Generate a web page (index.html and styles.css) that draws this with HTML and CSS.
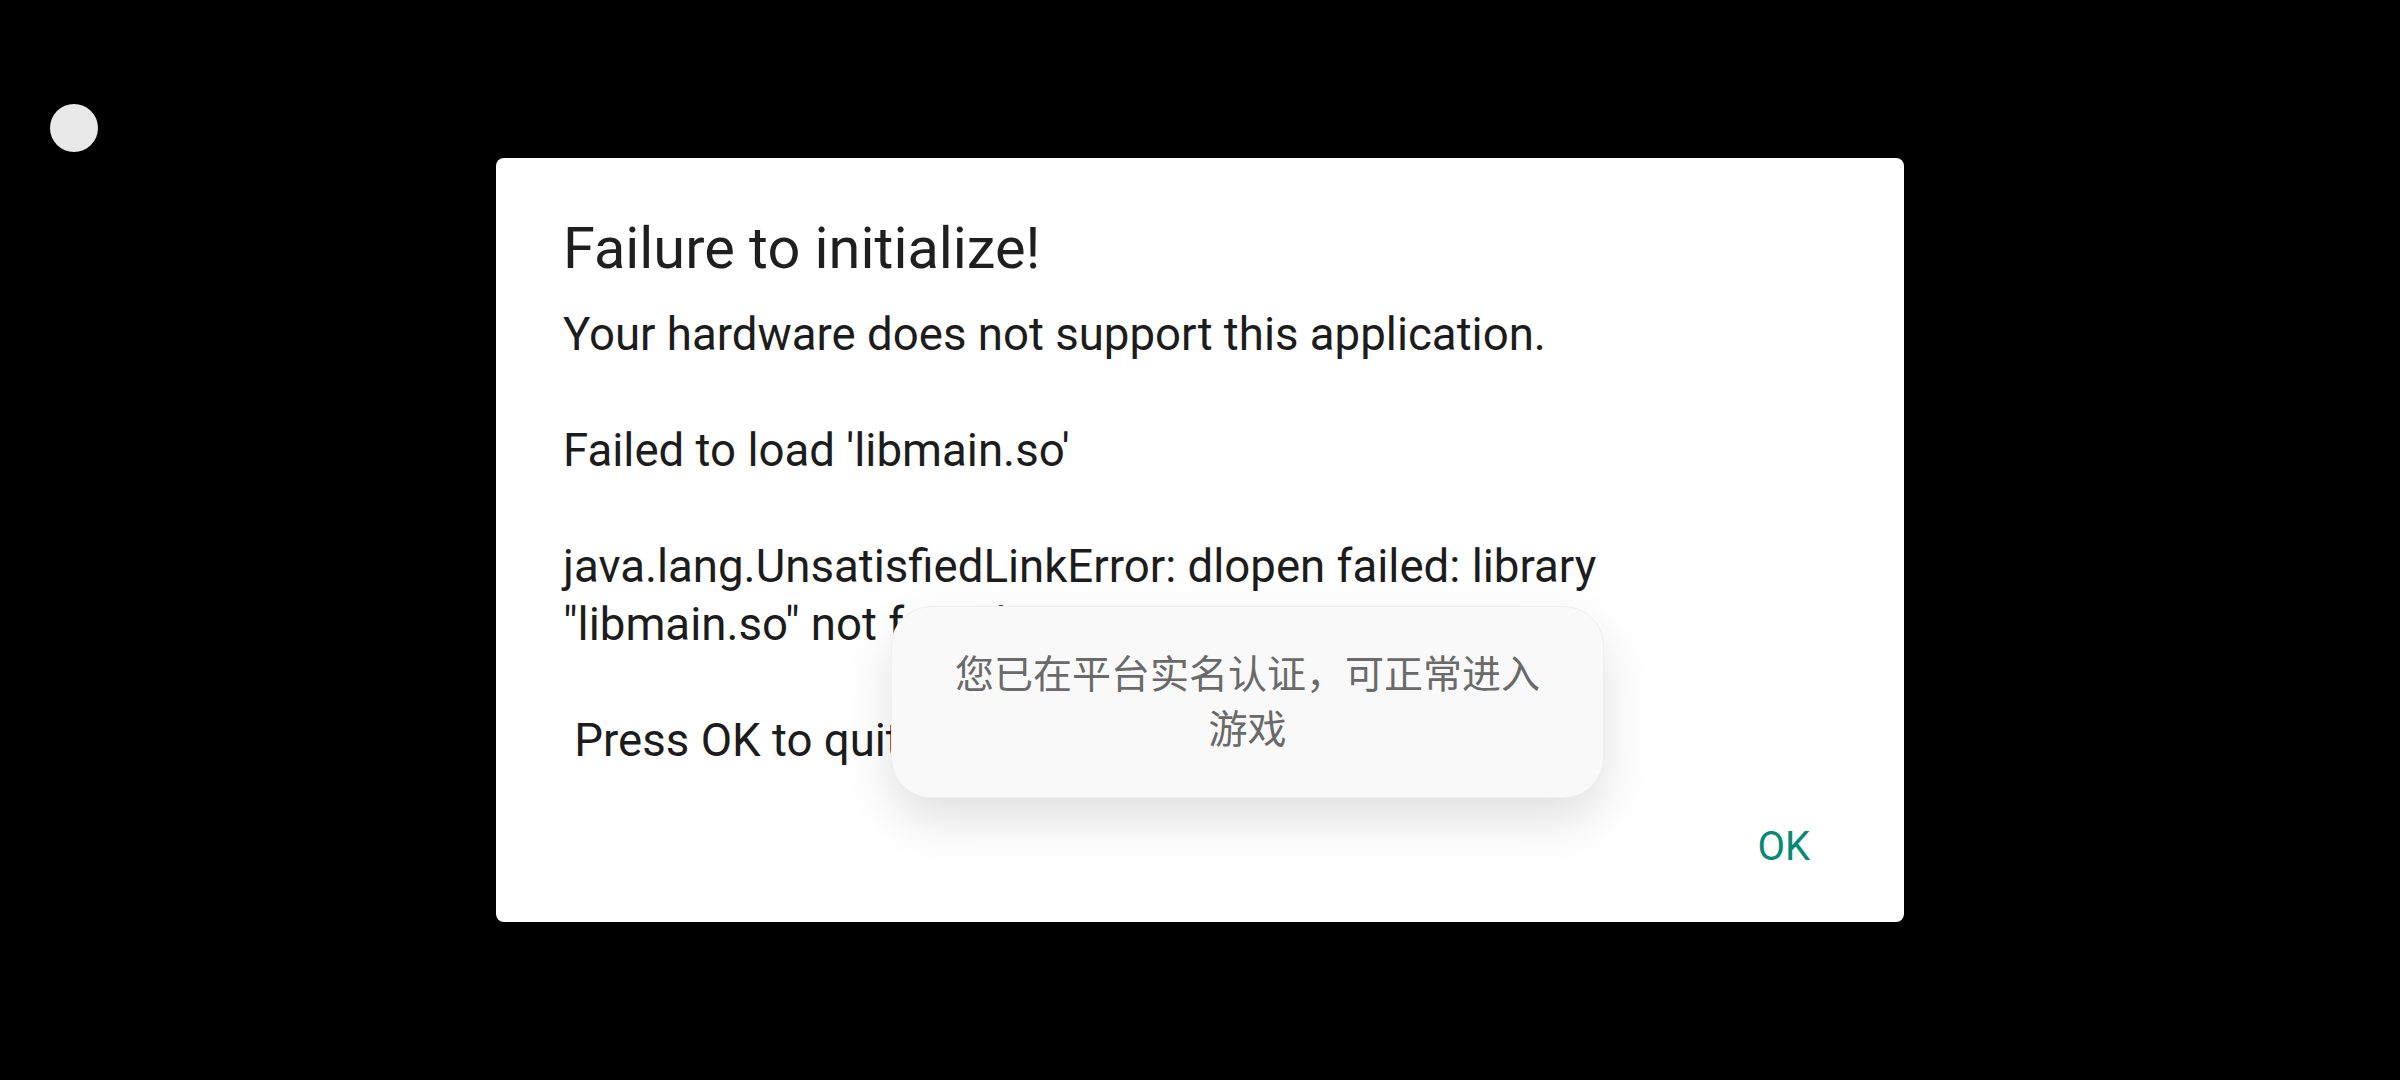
FILE: index.html
```html
<!DOCTYPE html>
<html lang="en">
<head>
  <meta charset="UTF-8">
  <title>Failure to initialize!</title>
  <link rel="stylesheet" href="styles.css">
</head>
<body>

  <div class="float-dot"></div>

  <div class="dialog">
    <h2 class="dialog-title">Failure to initialize!</h2>
    <p class="dialog-message">Your hardware does not support this application.

Failed to load 'libmain.so'

java.lang.UnsatisfiedLinkError: dlopen failed: library
"libmain.so" not found

 Press OK to quit.</p>
    <div class="dialog-actions">
      <button type="button" class="ok-btn">OK</button>
    </div>
  </div>

  <div class="toast">您已在平台实名认证，可正常进入游戏</div>

</body>
</html>
```

FILE: styles.css
```css
body {
  margin: 0;
  padding: 0;
  width: 2400px;
  height: 1080px;
  overflow: hidden;
  background-color: #000;
  font-family: Roboto, "Noto Sans CJK SC", sans-serif;
  display: flex;
  align-items: center;
  justify-content: center;
}

.float-dot {
  position: absolute;
  left: 50px;
  top: 104px;
  width: 48px;
  height: 48px;
  border-radius: 50%;
  background-color: #e8e8e8;
}

.dialog {
  width: 1408px;
  box-sizing: border-box;
  padding: 56px 67px 51px;
  background-color: #fff;
  border-radius: 8px;
}

.dialog-title {
  margin: 0 0 24px;
  font-size: 57.7px;
  line-height: 68px;
  font-weight: 400;
  color: #1f1f1f;
}

.dialog-message {
  margin: 0;
  font-size: 45.6px;
  line-height: 58px;
  color: #1c1c1c;
  white-space: pre-wrap;
}

.dialog-actions {
  display: flex;
  justify-content: flex-end;
  margin-top: 53px;
}

.ok-btn {
  padding: 0 27px;
  border: none;
  background: none;
  font-family: Roboto, sans-serif;
  font-size: 40px;
  line-height: 48px;
  color: #078a74;
  cursor: pointer;
}

.toast {
  position: absolute;
  left: 891px;
  top: 606px;
  width: 713px;
  box-sizing: border-box;
  padding: 37px 60px 43px;
  background-color: #f9f9f9;
  border: 1px solid #efefef;
  border-radius: 40px;
  box-shadow: 0 22px 50px rgba(0,0,0,0.12);
  font-family: "Noto Sans CJK SC", sans-serif;
  font-size: 39px;
  line-height: 55px;
  color: #6a6a6a;
  text-align: center;
}
```
